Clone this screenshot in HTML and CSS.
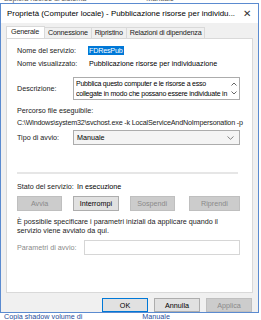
FILE: index.html
```html
<!DOCTYPE html>
<html lang="it">
<head>
  <meta charset="UTF-8">
  <title>Proprietà</title>
  <link rel="stylesheet" href="styles.css">
</head>
<body>
  <div class="strip strip-top"><span>Esplora risorse di sistema</span><span class="strip-right">Manuale</span></div>

  <div class="window">
    <div class="titlebar">
      <span class="title">Proprietà (Computer locale) - Pubblicazione risorse per individu...</span>
      <span class="close">✕</span>
    </div>

    <div class="body">
      <div class="tabs">
        <div class="tab active">Generale</div>
        <div class="tab">Connessione</div>
        <div class="tab">Ripristino</div>
        <div class="tab">Relazioni di dipendenza</div>
      </div>

      <div class="panel">
        <div class="row first">
          <span class="label">Nome del servizio:</span>
          <span class="selected">FDResPub</span>
        </div>
        <div class="row">
          <span class="label">Nome visualizzato:</span>
          <span>Pubblicazione risorse per individuazione</span>
        </div>

        <div class="row desc-row">
          <span class="label short">Descrizione:</span>
          <div class="textarea">
            <div class="textarea-text">Pubblica questo computer e le risorse a esso collegate in modo che possano essere individuate in</div>
            <div class="scroll">
              <svg width="6" height="4" viewBox="0 0 6 4"><path d="M0.5 3.5 L3 1 L5.5 3.5" fill="none" stroke="#555" stroke-width="0.9"/></svg>
              <svg width="6" height="4" viewBox="0 0 6 4"><path d="M0.5 0.5 L3 3 L5.5 0.5" fill="none" stroke="#555" stroke-width="0.9"/></svg>
            </div>
          </div>
        </div>

        <div class="path-label">Percorso file eseguibile:</div>
        <div class="path">C:\Windows\system32\svchost.exe -k LocalServiceAndNoImpersonation -p</div>

        <div class="row select-row">
          <span class="label short">Tipo di avvio:</span>
          <div class="select">
            <span>Manuale</span>
            <svg width="7" height="4" viewBox="0 0 7 4"><path d="M0.5 0.5 L3.5 3.3 L6.5 0.5" fill="none" stroke="#666" stroke-width="0.8"/></svg>
          </div>
        </div>

        <div class="separator"></div>

        <div class="row status-row">
          <span class="label status-label">Stato del servizio:</span>
          <span>In esecuzione</span>
        </div>

        <div class="buttons">
          <button class="btn disabled">Avvia</button>
          <button class="btn">Interrompi</button>
          <button class="btn disabled">Sospendi</button>
          <button class="btn disabled wide">Riprendi</button>
        </div>

        <p class="hint">È possibile specificare i parametri iniziali da applicare quando il servizio viene avviato da qui.</p>

        <div class="row params-row">
          <span class="label params-label">Parametri di avvio:</span>
          <div class="input"></div>
        </div>
      </div>

      <div class="footer">
        <button class="btn dlg default">OK</button>
        <button class="btn dlg">Annulla</button>
        <button class="btn dlg disabled">Applica</button>
      </div>
    </div>
  </div>

  <div class="strip strip-bottom"><span class="blue">Copia shadow volume di</span><span class="blue strip-right">Manuale</span></div>
</body>
</html>
```

FILE: styles.css
```css
* {
  box-sizing: border-box;
}

body {
  margin: 0;
  width: 261px;
  height: 320px;
  overflow: hidden;
  background: #ffffff;
  font-family: "Liberation Sans", Arial, sans-serif;
  font-size: 7.2px;
  color: #000;
}

.strip {
  height: 3px;
  overflow: hidden;
  display: flex;
  line-height: 8px;
  color: #555;
  padding-left: 4px;
  white-space: nowrap;
}

.strip span {
  margin-top: -5px;
}

.strip-right {
  margin-left: 60px;
}

.strip-bottom {
  height: 7px;
}

.strip-bottom span {
  margin-top: 0;
}

.blue {
  color: #1f4e9b;
}

.window {
  width: 259px;
  height: 310px;
  border: 1px solid #5b8bd0;
  background: #f0f0f0;
  display: flex;
  flex-direction: column;
}

.titlebar {
  height: 22px;
  background: #fff;
  display: flex;
  align-items: center;
  justify-content: space-between;
  padding: 0 7px 0 6px;
}

.title {
  font-size: 7.9px;
  color: #000;
  white-space: nowrap;
}

.close {
  font-size: 10px;
  color: #333;
}

.body {
  flex: 1;
  display: flex;
  flex-direction: column;
  padding: 3px 5px 0 5px;
}

.tabs {
  display: flex;
  align-items: flex-end;
  height: 12px;
}

.tab {
  height: 11px;
  line-height: 10px;
  padding: 0 3px;
  border: 1px solid #d9d9d9;
  border-bottom: none;
  background: #f0f0f0;
  margin-left: -1px;
  color: #222;
  white-space: nowrap;
  letter-spacing: -0.2px;
}

.tab.active {
  height: 12px;
  background: #fff;
  margin-left: 0;
  padding: 0 5px 0 4px;
  position: relative;
  z-index: 1;
}

.panel {
  height: 255px;
  background: #fff;
  border: 1px solid #d9d9d9;
  padding: 5px 12px 0 10px;
  display: flex;
  flex-direction: column;
  white-space: nowrap;
}

.row {
  display: flex;
  align-items: center;
}

.label {
  width: 72px;
  flex-shrink: 0;
  color: #222;
}

.label.short {
  width: 56px;
}

.first {
  height: 11px;
  margin-top: 1px;
}

.selected {
  background: #0078d7;
  color: #fff;
  padding: 0 1px;
  margin-left: -1px;
  letter-spacing: -0.2px;
}

.row + .row {
  margin-top: 3px;
}

.desc-row {
  margin-top: 9px !important;
}

.textarea {
  width: 170px;
  height: 23px;
  border: 1px solid #acacac;
  display: flex;
  padding: 1px 1px 0 2px;
}

.textarea-text {
  flex: 1;
  font-size: 7px;
  line-height: 10px;
  overflow: hidden;
  white-space: normal;
  letter-spacing: -0.22px;
}

.scroll {
  width: 9px;
  display: flex;
  flex-direction: column;
  justify-content: space-between;
  align-items: center;
  padding: 3px 0 4px;
}

.path-label {
  margin-top: 6px;
  color: #222;
}

.path {
  margin-top: 3px;
  color: #222;
  letter-spacing: -0.18px;
}

.select-row {
  margin-top: 3px !important;
}

.select {
  width: 170px;
  height: 15px;
  border: 1px solid #acacac;
  background: #f4f4f4;
  display: flex;
  align-items: center;
  justify-content: space-between;
  padding: 0 5px 0 3px;
}

.separator {
  height: 2px;
  background: #e6e6e6;
  margin-top: 27px;
  margin-right: 2px;
}

.status-row {
  margin-top: 8px !important;
}

.status-label {
  width: 60px;
}

.buttons {
  display: flex;
  gap: 11px;
  margin-top: 5px;
}

.btn {
  width: 46px;
  height: 15px;
  padding: 0;
  font-family: "Liberation Sans", Arial, sans-serif;
  font-size: 7.2px;
  color: #000;
  background: #e1e1e1;
  border: 1px solid #adadad;
}

.btn.wide {
  width: 52px;
  margin-left: 3px;
}

.btn.disabled {
  background: #cccccc;
  border-color: #bfbfbf;
  color: #8a8a8a;
}

.hint {
  margin: 6px 0 0;
  line-height: 9px;
  color: #222;
  white-space: normal;
}

.params-row {
  margin-top: 5px !important;
}

.params-label {
  width: 67px;
  color: #8a8a8a;
}

.input {
  width: 158px;
  height: 15px;
  border: 1px solid #d6d6d6;
  background: #fff;
}

.footer {
  display: flex;
  justify-content: flex-end;
  gap: 6px;
  padding: 5px 1px 0 0;
}

.btn.dlg {
  width: 46px;
  height: 14px;
}

.btn.default {
  border: 1px solid #0078d7;
}
```
